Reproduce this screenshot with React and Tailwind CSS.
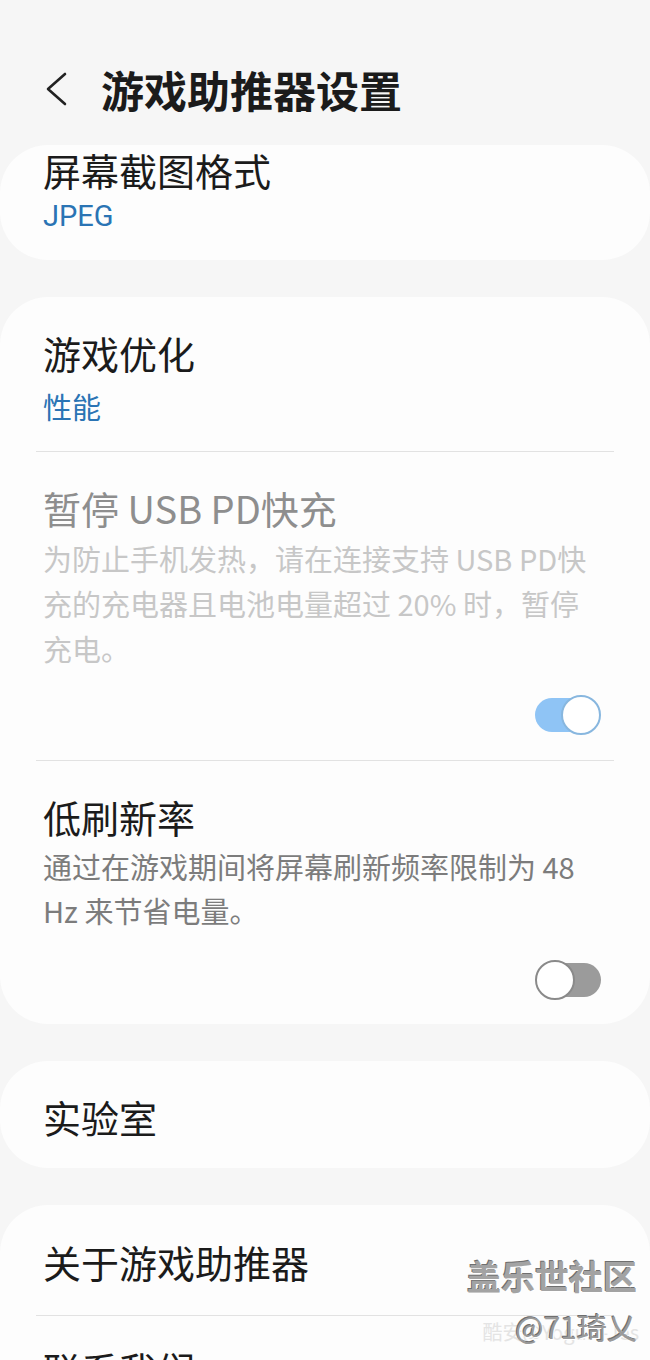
import React from "react";

const FONT = { fontFamily: '"Noto Sans CJK SC", "Noto Sans", sans-serif' };

function Toggle({ on }) {
  if (on) {
    return (
      <div className="relative w-[66px] h-[40px]">
        <div className="absolute left-0 right-[2px] top-[3px] h-[34px] rounded-full bg-[#8fc4f5]" />
        <div className="absolute right-0 top-0 w-[40px] h-[40px] rounded-full bg-white border-2 border-[#88b7df]" />
      </div>
    );
  }
  return (
    <div className="relative w-[66px] h-[40px]">
      <div className="absolute left-[2px] right-0 top-[3px] h-[34px] rounded-full bg-[#9b9b9b]" />
      <div className="absolute left-0 top-0 w-[40px] h-[40px] rounded-full bg-white border-2 border-[#8a8a8a]" />
    </div>
  );
}

function Divider() {
  return <div className="mx-[36px] h-px bg-[#e2e2e2]" />;
}

export default function App() {
  return (
    <div
      className="relative w-[650px] h-[1360px] overflow-hidden bg-[#f6f6f6] text-[#1b1b1b]"
      style={FONT}
    >
      {/* Header */}
      <div className="h-[145px] flex items-start pt-[64px]">
        <div className="w-[103px] h-[50px] flex items-center pl-[44px]">
          <svg width="26" height="34" viewBox="0 0 26 34" fill="none">
            <path d="M21 2 L4 17 L21 32" stroke="#222" strokeWidth="2.6" strokeLinecap="round" strokeLinejoin="round" />
          </svg>
        </div>
        <div className="text-[43px] leading-[50px] font-bold -ml-[2px]">游戏助推器设置</div>
      </div>

      {/* Card 1 */}
      <div className="bg-[#fdfdfd] rounded-[48px] pl-[43px] pr-[49px] pb-[24px]">
        <div className="text-[38px] leading-[50px]">屏幕截图格式</div>
        <div className="mt-[1px] text-[29px] leading-[40px] text-[#2a74b4]" style={{ fontFamily: '"Roboto", "Noto Sans CJK SC", sans-serif' }}>JPEG</div>
      </div>

      {/* Card 2 */}
      <div className="mt-[37px] bg-[#fdfdfd] rounded-[48px]">
        <div className="pl-[43px] pr-[49px] pt-[31px] pb-[25px]">
          <div className="text-[38px] leading-[50px]">游戏优化</div>
          <div className="mt-[8px] text-[29px] leading-[40px] text-[#2a74b4]">性能</div>
        </div>
        <Divider />
        <div className="pl-[43px] pr-[49px] pt-[31px] pb-[25px]">
          <div className="text-[38px] leading-[50px] text-[#8e8e8e]">暂停 USB PD快充</div>
          <div className="mt-[3px] text-[29px] leading-[45px] text-[#c7c7c7]">
            为防止手机发热，请在连接支持 USB PD快充的充电器且电池电量超过 20% 时，暂停充电。
          </div>
          <div className="mt-[24px] flex justify-end">
            <Toggle on />
          </div>
        </div>
        <Divider />
        <div className="pl-[43px] pr-[49px] pt-[31px] pb-[24px]">
          <div className="text-[38px] leading-[50px]">低刷新率</div>
          <div className="mt-[2px] text-[29px] leading-[44px] text-[#7c7c7c]">
            通过在游戏期间将屏幕刷新频率限制为 48 Hz 来节省电量。
          </div>
          <div className="mt-[28px] flex justify-end">
            <Toggle on={false} />
          </div>
        </div>
      </div>

      {/* Card 3 */}
      <div className="mt-[37px] bg-[#fdfdfd] rounded-[48px] pl-[43px] pr-[49px] pt-[31px] pb-[26px]">
        <div className="text-[38px] leading-[50px]">实验室</div>
      </div>

      {/* Card 4 */}
      <div className="mt-[37px] bg-[#fdfdfd] rounded-[48px]">
        <div className="pl-[43px] pr-[49px] pt-[32px] pb-[28px]">
          <div className="text-[38px] leading-[50px]">关于游戏助推器</div>
        </div>
        <Divider />
        <div className="pl-[43px] pr-[49px] pt-[28px] pb-[28px]">
          <div className="text-[38px] leading-[50px]">联系我们</div>
        </div>
      </div>

      {/* Watermark */}
      <div className="absolute right-[13px] top-[1254px] flex flex-col items-end pointer-events-none">
        <div
          className="text-[34px] leading-[44px] font-bold text-[#a3a3a3]"
          style={{ textShadow: "1px 1px 0 #ffffff, -1px -1px 0 #6f6f6f" }}
        >
          盖乐世社区
        </div>
        <div className="relative mt-[10px] h-[36px]">
          <div className="absolute right-[-2px] top-[12px] text-[20px] leading-[24px] text-[#e4e4e4] whitespace-nowrap">
            酷安@Yogurt-Jes
          </div>
          <div
            className="relative text-[30px] leading-[36px] text-[#9a9a9a]"
            style={{ textShadow: "1px 1px 0 #ffffff, -1px -1px 0 #6f6f6f" }}
          >
            @71琦乂
          </div>
        </div>
      </div>
    </div>
  );
}
